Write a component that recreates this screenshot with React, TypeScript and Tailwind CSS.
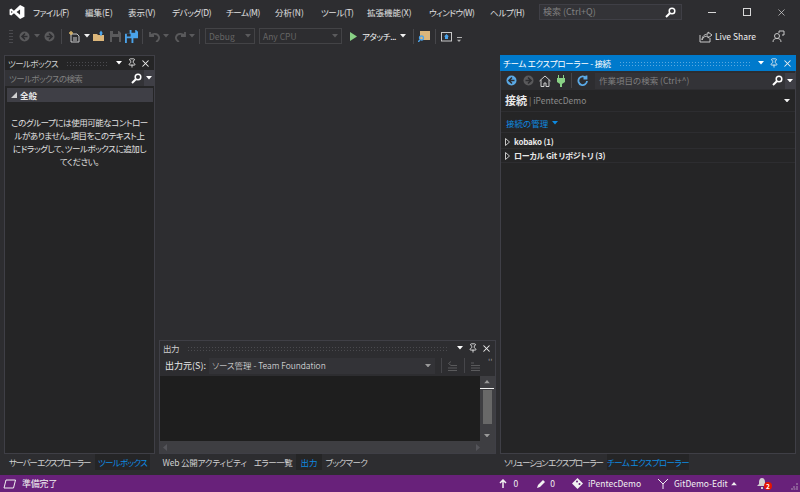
import { Pin, X } from 'lucide-react'

const menus: [string, number, string][] = [
  ['ファイル(F)', 52, 'tracking-[-0.6px]'],
  ['編集(E)', 43, ''],
  ['表示(V)', 44, ''],
  ['デバッグ(D)', 54, 'tracking-[-0.4px]'],
  ['チーム(M)', 49, 'tracking-[-0.4px]'],
  ['分析(N)', 46, ''],
  ['ツール(T)', 46, 'tracking-[-0.4px]'],
  ['拡張機能(X)', 62, ''],
  ['ウィンドウ(W)', 61, 'tracking-[-0.5px]'],
  ['ヘルプ(H)', 50, 'tracking-[-0.3px]'],
]

function Arrow({ className = 'text-[#d0d0d0]' }: { className?: string }) {
  return (
    <svg width="6" height="3.5" viewBox="0 0 7 4" className={className}>
      <path d="M0 0h7L3.5 4z" fill="currentColor" />
    </svg>
  )
}

function SearchIcon({ className = '' }: { className?: string }) {
  return (
    <svg width="11" height="11" viewBox="0 0 11 11" fill="none" stroke="#fff" className={className}>
      <circle cx="7" cy="4" r="2.8" strokeWidth="1.5" />
      <path d="M4.8 6.2 1 10" strokeWidth="2" />
    </svg>
  )
}

function Sep({ className = '' }: { className?: string }) {
  return <div className={`h-[15px] w-px bg-[#46464a] ${className}`} />
}

// dotted gripper that fills the title bars
function Grip({ className = 'bg-[radial-gradient(#4a4a4e_0.7px,transparent_0.8px)]' }: { className?: string }) {
  return <div className={`mx-2 h-[5px] flex-1 bg-[length:3px_3px] ${className}`} />
}

function PanelTitle({ title, active }: { title: string; active?: boolean }) {
  return (
    <div className={`flex shrink-0 items-center pl-[3px] pr-[3px] ${active ? '-mx-px h-[16px] bg-[#007acc] text-white' : 'h-[14px] text-[#d0d0d0]'}`}>
      <span className={`whitespace-nowrap text-[8.5px] ${active ? 'tracking-[-0.3px]' : 'tracking-[-0.6px]'}`}>{title}</span>
      <Grip className={active ? 'bg-[radial-gradient(#59a8e0_0.7px,transparent_0.8px)]' : undefined} />
      <Arrow className="text-white" />
      <Pin size={10} strokeWidth={2} className="ml-[5px] text-[#f0f0f0]" />
      <X size={11} strokeWidth={2.2} className="ml-[3px] text-[#f0f0f0]" />
    </div>
  )
}

function SearchRow({ placeholder, className, textClass }: { placeholder: string; className: string; textClass: string }) {
  return (
    <div className={`flex h-[16px] items-center bg-[#333337] ${className}`}>
      <span className={`flex-1 whitespace-nowrap pl-[4px] text-[8.5px] text-[#808080] ${textClass}`}>{placeholder}</span>
      <SearchIcon className="mr-[2px]" />
      <div className="flex h-full w-[10px] items-center justify-center bg-[#3f3f46]">
        <Arrow className="text-white" />
      </div>
    </div>
  )
}

function Tab({ label, active, w }: { label: string; active?: boolean; w: string }) {
  return (
    <div className={`flex h-[16px] items-center justify-center whitespace-nowrap text-[8.5px] ${w} ${active ? 'bg-[#252526] text-[#0e8ae0]' : 'text-[#d0d0d0]'}`}>
      {label}
    </div>
  )
}

function Circle({ color, dir }: { color: string; dir: 'l' | 'r' }) {
  return (
    <svg width="11" height="11" viewBox="0 0 11 11">
      <circle cx="5.5" cy="5.5" r="5" fill={color} />
      <path d={dir === 'l' ? 'M6 2.5 3 5.5l3 3M3.5 5.5h5' : 'M5 2.5l3 3-3 3M7.5 5.5h-5'} stroke="#2d2d30" strokeWidth="1.6" fill="none" />
    </svg>
  )
}

function Toolbar() {
  return (
    <div className="flex h-[23px] shrink-0 items-center pt-[1px] text-[8.5px]">
      <div className="ml-[9px] h-[15px] w-[4px] bg-[radial-gradient(#4a4a4e_0.7px,transparent_0.8px)] bg-[length:2px_3px]" />
      <div className="ml-[6px]"><Circle color="#5a5a5c" dir="l" /></div>
      <Arrow className="ml-[4px] text-[#5a5a5c]" />
      <div className="ml-[4px]"><Circle color="#5a5a5c" dir="r" /></div>
      <Sep className="ml-[6px]" />
      <svg width="13" height="13" viewBox="0 0 13 13" className="ml-[6px]">
        <path d="M3 4h6l2 2v6H3z" fill="#2d2d30" stroke="#c8c8c8" />
        <path d="M1 3h4M3 1v4" stroke="#d9b468" strokeWidth="1.4" />
        <path d="M5 8h4M5 10h4" stroke="#c8c8c8" />
      </svg>
      <Arrow className="ml-[3px]" />
      <svg width="12" height="12" viewBox="0 0 12 12" className="ml-[3px]">
        <path d="M0 4h4l1 1h6v6H0z" fill="#dcb67a" />
        <path d="M6 3.500l2-3 2 3H9v2H7v-2z" fill="#4aa3ea" />
      </svg>
      <svg width="11" height="11" viewBox="0 0 11 11" className="ml-[5px]">
        <path d="M0 0h9l2 2v9H0z" fill="#5a5a5c" />
        <path d="M3 0h5v3H3zM2 6h7v5H2z" fill="#2d2d30" />
      </svg>
      <svg width="13" height="13" viewBox="0 0 14 14" className="ml-[4px]">
        <path d="M5 0h7l2 2v7H5z" fill="#4aa3ea" />
        <path d="M7 0h4v3H7z" fill="#2d2d30" />
        <path d="M0 4h7l2 2v8H0z" fill="#4aa3ea" />
        <path d="M2 4h4v3H2zM2 9h5v5H2z" fill="#2d2d30" />
      </svg>
      <Sep className="ml-[4px]" />
      <svg width="11" height="11" viewBox="0 0 11 11" className="ml-[6px]" fill="none" stroke="#5a5a5c" strokeWidth="1.8">
        <path d="M1 1v4h4M1 5c2-3 8-3 9 1 .4 2-1 4-3 5" />
      </svg>
      <Arrow className="ml-[3px] text-[#5a5a5c]" />
      <svg width="11" height="11" viewBox="0 0 11 11" className="ml-[6px]" fill="none" stroke="#5a5a5c" strokeWidth="1.8">
        <path d="M10 1v4H6M10 5C8 2 2 2 1 6c-.4 2 1 4 3 5" />
      </svg>
      <Arrow className="ml-[3px] text-[#5a5a5c]" />
      <Sep className="ml-[4px]" />
      <div className="ml-[5px] flex h-[16px] w-[50px] items-center justify-between border border-[#434346] pl-[3px] pr-[3px] text-[#656565]">
        Debug <Arrow className="text-[#5a5a5c]" />
      </div>
      <div className="ml-[4px] flex h-[16px] w-[83px] items-center justify-between border border-[#434346] pl-[3px] pr-[3px] text-[#656565]">
        Any CPU <Arrow className="text-[#5a5a5c]" />
      </div>
      <svg width="7" height="9" viewBox="0 0 7 9" className="ml-[8px]">
        <path d="M0 0l7 4.5L0 9z" fill="#89d185" />
      </svg>
      <span className="ml-[5px] w-[33px] whitespace-nowrap tracking-[-0.4px] text-[#f1f1f1]">アタッチ...</span>
      <Arrow className="ml-[5px]" />
      <Sep className="ml-[7px]" />
      <svg width="12" height="12" viewBox="0 0 12 12" className="ml-[4px]">
        <path d="M2 1h10v9H2z" fill="#dcb67a" />
        <circle cx="3.500" cy="8" r="2" fill="none" stroke="#4aa3ea" strokeWidth="1.3" />
        <path d="M2 10 0 12" stroke="#4aa3ea" strokeWidth="1.4" />
      </svg>
      <Sep className="ml-[5px]" />
      <svg width="11" height="11" viewBox="0 0 11 11" className="ml-[5px]">
        <rect x="0.5" y="1.5" width="10" height="8.5" fill="none" stroke="#c8c8c8" />
        <path d="M5.5 3 3 5.5h1V8h3V5.5h1z" fill="#4aa3ea" />
      </svg>
      <div className="ml-[4px] mt-[7px] flex flex-col items-center gap-[1px]">
        <div className="h-px w-[5px] bg-[#b0b0b0]" />
        <Arrow className="scale-75 text-[#b0b0b0]" />
      </div>
      <svg width="13" height="13" viewBox="0 0 13 13" className="ml-auto" fill="none" stroke="#c8c8c8">
        <path d="M1 5v7h10V8M3 10c0-4 3-6 6-6V2l4 3-4 3V6C6 6 4 7 3 10z" />
      </svg>
      <span className="ml-[3px] w-[57px] whitespace-nowrap text-[8.5px] text-[#f1f1f1]">Live Share</span>
      <svg width="13" height="13" viewBox="0 0 13 13" className="mr-[15px]" fill="none" stroke="#c8c8c8">
        <circle cx="5" cy="6" r="2.5" />
        <path d="M1 12c0-3 2-3.5 4-3.5S9 9 9 12M7 3V1h5v4h-2" />
      </svg>
    </div>
  )
}

function ToolboxPanel() {
  return (
    <div className="flex flex-1 flex-col border border-[#3f3f46] bg-[#252526]">
      <PanelTitle title="ツールボックス" />
      <SearchRow placeholder="ツールボックスの検索" className="" textClass="tracking-[-0.6px]" />
      <div className="ml-[2px] mr-[1px] mt-[2px] flex h-[14px] items-center bg-[#3f3f46] text-[8.5px] font-bold text-[#e8e8e8]">
        <svg width="6" height="6" viewBox="0 0 6 6" className="ml-[4px] mr-[3px]">
          <path d="M6 0v6H0z" fill="#d0d0d0" />
        </svg>
        全般
      </div>
      <p className="mt-[14px] whitespace-nowrap text-center text-[8.5px] leading-[13px] tracking-[-0.45px] text-[#e0e0e0]">
        このグループには使用可能なコントロー
        <br />
        ルがありません。項目をこのテキスト上
        <br />
        にドラッグして、ツールボックスに追加し
        <br />
        てください。
      </p>
    </div>
  )
}

function OutputPanel() {
  return (
    <div className="flex h-[114px] flex-col border border-[#3f3f46] bg-[#2d2d30]">
      <PanelTitle title="出力" />
      <div className="flex h-[21px] items-center text-[9px] text-[#e8e8e8]">
        <span className="ml-[5px] w-[44px] whitespace-nowrap">出力元(S):</span>
        <div className="flex h-[16px] w-[226px] items-center justify-between bg-[#333337] pl-[3px] pr-[4px] text-[8.5px] font-light text-[#f1f1f1]">
          ソース管理 - Team Foundation
          <Arrow className="text-[#999]" />
        </div>
        <Sep className="ml-[6px]" />
        <svg width="11" height="11" viewBox="0 0 11 11" className="ml-[5px]" stroke="#5a5a5c" fill="none">
          <path d="M1 10.500h9M1 8h9M4 5.500h6M4 1.500 1.500 3.500 4 5.500" />
        </svg>
        <Sep className="ml-[6px]" />
        <svg width="11" height="11" viewBox="0 0 11 11" className="ml-[5px]" stroke="#5a5a5c" fill="none">
          <path d="M1 10.500h9M1 8h9M1 5.500h9M1 3h3" />
        </svg>
        <span className="ml-[7px] -mt-[8px] text-[8px] leading-none text-[#999]">''</span>
      </div>
      <div className="flex flex-1">
        <div className="flex-1 bg-[#1e1e1e]" />
        <div className="flex w-[15px] flex-col items-center bg-[#3e3e42] pr-[1px]">
          <Arrow className="mt-[4px] rotate-180 text-[#999]" />
          <div className="mt-[4px] h-px w-full bg-[#f0f0f0]" />
          <div className="mt-px h-[34px] w-[9px] bg-[#686868]" />
          <Arrow className="mt-auto mb-[4px] text-[#999]" />
        </div>
      </div>
      <div className="flex h-[12px] items-center justify-between bg-[#3e3e42] px-[3px]">
        <svg width="4" height="7" viewBox="0 0 4 7"><path d="M4 0v7L0 3.5z" fill="#55555a" /></svg>
        <svg width="4" height="7" viewBox="0 0 4 7" className="mr-[12px]"><path d="M0 0v7l4-3.5z" fill="#55555a" /></svg>
      </div>
    </div>
  )
}

function TreeRow({ label }: { label: string }) {
  return (
    <div className="flex h-[14px] items-center border-b border-[#2d2d30] text-[8px] font-semibold tracking-[-0.2px] text-[#e8e8e8]">
      <svg width="5" height="8" viewBox="0 0 5 8" className="ml-[4px] mr-[4px]">
        <path d="M.5.5v7L4.5 4z" fill="none" stroke="#c8c8c8" />
      </svg>
      {label}
    </div>
  )
}

function TeamPanel() {
  return (
    <div className="flex flex-1 flex-col border border-[#3f3f46] border-t-0 bg-[#252526]">
      <PanelTitle title="チーム エクスプローラー - 接続" active />
      <div className="flex h-[19px] items-center bg-[#2d2d30]">
        <div className="ml-[5px]"><Circle color="#5aa9e6" dir="l" /></div>
        <div className="ml-[6px]"><Circle color="#5a5a5c" dir="r" /></div>
        <svg width="12" height="12" viewBox="0 0 12 12" className="ml-[5px]" fill="none" stroke="#d0d0d0">
          <path d="M.5 6 6 1l5.5 5M2 5v6.5h3V8h2v3.5h3V5" />
        </svg>
        <svg width="8" height="12" viewBox="0 0 8 12" className="ml-[6px]" fill="#89d185">
          <path d="M1 0h1v3h4V0h1v3h1v4L5 9v3H3V9L0 7V3h1z" />
        </svg>
        <Sep className="ml-[6px]" />
        <svg width="11" height="11" viewBox="0 0 11 11" className="ml-[5px]" fill="none" stroke="#5aa9e6" strokeWidth="1.8">
          <path d="M9 3a4.3 4.3 0 1 0 1 3M9.5.5v3h-3" />
        </svg>
        <SearchRow placeholder="作業項目の検索 (Ctrl+^)" className="ml-[7px] flex-1" textClass="" />
      </div>
      <div className="flex h-[22px] items-center border-b border-[#2d2d30] pl-[4px] pr-[5px]">
        <span className="text-[11px] font-bold text-[#e8e8e8]">接続</span>
        <span className="ml-[2px] text-[8.5px] text-[#8a8a8a]">| iPentecDemo</span>
        <Arrow className="ml-auto text-[#f0f0f0]" />
      </div>
      <div className="mb-[2px] flex h-[21px] items-center border-b border-[#2d2d30] pl-[5px] pt-[2px] text-[8.5px] text-[#0e8ae0]">
        接続の管理
        <Arrow className="ml-[4px] text-[#0e8ae0]" />
      </div>
      <TreeRow label="kobako (1)" />
      <TreeRow label="ローカル Git リポジトリ (3)" />
    </div>
  )
}

function StatusBar() {
  return (
    <div className="flex h-[17px] shrink-0 items-center bg-[#68217a] text-[9px] text-[#f1f1f1]">
      <svg width="13" height="10" viewBox="0 0 13 10" className="ml-[3px]" fill="none" stroke="#f1f1f1">
        <path d="M3 1h9.5L10.5 9H1z" />
      </svg>
      <span className="ml-[6px] tracking-[-0.2px]">準備完了</span>
      <svg width="8" height="9" viewBox="0 0 8 9" className="ml-auto" fill="none" stroke="#f1f1f1" strokeWidth="1.5">
        <path d="M4 9V1M1 4l3-3 3 3" />
      </svg>
      <span className="ml-[7px] text-[8.5px]">0</span>
      <svg width="9" height="9" viewBox="0 0 9 9" className="ml-[19px]" fill="#f1f1f1">
        <path d="M0 9l1-3 5-5 2 2-5 5z" />
      </svg>
      <span className="ml-[4px] text-[8.5px]">0</span>
      <svg width="11" height="11" viewBox="0 0 11 11" className="ml-[17px]" fill="#f1f1f1">
        <path d="M5.5 0 11 5.5 5.5 11 0 5.5z" />
        <circle cx="5" cy="3.5" r="1" fill="#68217a" />
        <circle cx="7.5" cy="6" r="1" fill="#68217a" />
      </svg>
      <span className="ml-[5px] w-[52px] whitespace-nowrap text-[8.5px]">iPentecDemo</span>
      <svg width="12" height="11" viewBox="0 0 12 11" className="ml-[17px]" fill="none" stroke="#f1f1f1">
        <path d="M1 1l5 5 5-5M6 6v5" />
      </svg>
      <span className="ml-[5px] w-[53px] whitespace-nowrap text-[8.5px]">GitDemo-Edit</span>
      <Arrow className="ml-[4px] rotate-180 text-[#f1f1f1]" />
      <div className="relative ml-[20px]">
        <svg width="10" height="11" viewBox="0 0 10 11" fill="#d0d0d0">
          <path d="M5 0c2 0 3 2 3 4v2l2 2H0l2-2V4c0-2 1-4 3-4zM4 9h2v2H4z" />
        </svg>
        <span className="absolute -right-[5px] top-[4px] flex h-[8px] w-[8px] items-center justify-center rounded-full bg-[#e51400] text-[6.5px] font-bold leading-none text-white">
          2
        </span>
      </div>
      <svg width="7" height="7" viewBox="0 0 7 7" className="ml-[24px] mr-[2px] mt-[6px]" fill="#8a5a96">
        <path d="M5 0h2v2H5zM2 3h2v2H2zM5 3h2v2H5zM0 5h2v2H0zM2.5 5h2v2h-2zM5 5h2v2H5z" />
      </svg>
    </div>
  )
}

export default function App() {
  return (
    <div className="flex h-[492px] w-[800px] flex-col overflow-hidden bg-[#2d2d30] font-['Noto_Sans_CJK_JP','Liberation_Sans',sans-serif] [font-feature-settings:'palt'] text-[#f1f1f1]">
      {/* title + menu */}
      <div className="flex h-[24px] shrink-0 items-center">
        <svg width="16" height="14" viewBox="0 0 17 16" className="ml-[9px]" fill="#fff">
          <path d="M12 0l5 2.5v11L12 16 5 9.5 2 12 0 11V5l2-1 3 2.5zM2 6.5v3L3.5 8zM8 8l4 3V5z" fillRule="evenodd" />
        </svg>
        <div className="ml-[8px] flex text-[8.5px] text-[#e0e0e0]">
          {menus.map(([label, w, track]) => (
            <span key={label} className={`whitespace-nowrap ${track}`} style={{ width: w }}>
              {label}
            </span>
          ))}
        </div>
        <div className="ml-[-1px] flex h-[16px] w-[143px] items-center justify-between border border-[#3f3f46] bg-[#333337] pl-[3px] pr-[5px] text-[9px] text-[#808080]">
          検索 (Ctrl+Q)
          <SearchIcon />
        </div>
        <div className="ml-[26px] flex items-center text-[#d8d8d8]">
          <div className="h-px w-[8px] bg-[#d8d8d8]" />
          <div className="ml-[27px] h-[8px] w-[8px] border border-[#d8d8d8]" />
          <X size={11} strokeWidth={1.5} className="ml-[25px]" />
        </div>
      </div>
      <Toolbar />
      <div className="mt-[8px] flex min-h-0 flex-1 gap-[4px] pl-[4px] pr-[4px]">
        <div className="flex w-[151px] flex-col">
          <ToolboxPanel />
          <div className="mb-[5px] flex">
            <Tab label="サーバー エクスプローラー" w="w-[91px] tracking-[-1.3px]" />
            <Tab label="ツールボックス" active w="w-[55px] tracking-[-0.7px]" />
          </div>
        </div>
        <div className="flex w-[337px] flex-col">
          <div className="flex-1" />
          <OutputPanel />
          <div className="mb-[5px] flex">
            <Tab label="Web 公開アクティビティ" w="w-[91px] tracking-[-0.2px]" />
            <Tab label="エラー一覧" w="w-[46px] tracking-[-0.5px]" />
            <Tab label="出力" active w="w-[26px]" />
            <Tab label="ブックマーク" w="w-[49px] tracking-[-0.6px]" />
          </div>
        </div>
        <div className="flex w-[296px] flex-col">
          <TeamPanel />
          <div className="mb-[5px] flex">
            <Tab label="ソリューション エクスプローラー" w="w-[107px] tracking-[-1.100px]" />
            <Tab label="チーム エクスプローラー" active w="w-[82px] tracking-[-0.6px]" />
          </div>
        </div>
      </div>
      <StatusBar />
    </div>
  )
}
